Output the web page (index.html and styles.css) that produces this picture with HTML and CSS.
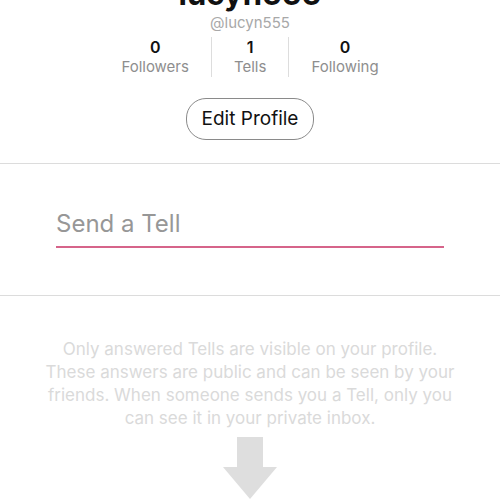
FILE: index.html
```
<!DOCTYPE html>
<html>
	<head>
		<meta charset="UTF-8">
		<title>Profile</title>
		<link rel="stylesheet" href="styles.css">
	</head>
	<body>
		<div class="profile">
			<div class="name">lucyn555</div>
			<div class="handle">@lucyn555</div>
			<ul class="stats">
				<li><b>0</b><span>Followers</span></li>
				<li><b>1</b><span>Tells</span></li>
				<li><b>0</b><span>Following</span></li>
			</ul>
			<a class="edit" href="#">Edit Profile</a>
		</div>
		<!--输入框-->
		<div class="send">
			<input type="text" placeholder="Send a Tell">
		</div>
		<div class="empty">
			<p>Only answered Tells are visible on your profile. These answers are public and can be seen by your friends. When someone sends you a Tell, only you can see it in your private inbox.</p>
			<svg class="arrow" width="56" height="62" viewBox="0 0 56 62">
				<polygon points="15,0 41,0 41,30 55,30 28,62 1,30 15,30" fill="#dedede" />
			</svg>
		</div>
	</body>
</html>
```
FILE: styles.css
```
* {
	margin: 0;
	padding: 0;
}

body {
	font-family: Inter, "Noto Sans", sans-serif;
	background: #fff;
	overflow: hidden;
}

.profile {
	display: flex;
	flex-direction: column;
	align-items: center;
	margin-top: -24px;
	padding-bottom: 23px;
	border-bottom: 1px solid #dcdcdc;
}

.name {
	font-size: 31px;
	font-weight: 700;
	line-height: 36px;
	color: #111;
}

.handle {
	margin-top: 2px;
	font-size: 15px;
	line-height: 18px;
	color: #a8a8a8;
}

.stats {
	list-style: none;
	display: flex;
	margin-top: 5px;
}

.stats li {
	display: flex;
	flex-direction: column;
	align-items: center;
	padding: 0 22px;
	border-left: 1px solid #ddd;
}

.stats li:first-child {
	border-left: none;
}

.stats b {
	font-size: 16px;
	font-weight: 600;
	line-height: 20px;
	color: #111;
}

.stats span {
	font-size: 15px;
	line-height: 20px;
	color: #8e8e8e;
}

.edit {
	margin-top: 21px;
	padding: 0 15px;
	height: 40px;
	line-height: 40px;
	border: 1px solid #8a8a8a;
	border-radius: 20px;
	font-size: 19px;
	color: #111;
	text-decoration: none;
}

.send {
	padding: 36px 56px 47px;
	border-bottom: 1px solid #dcdcdc;
}

.send input {
	display: block;
	width: 100%;
	border: none;
	border-bottom: 2px solid #d6648a;
	outline: none;
	font-family: inherit;
	font-size: 24px;
	height: 46px;
	color: #111;
}

.send input::placeholder {
	color: #979797;
}

.empty {
	display: flex;
	flex-direction: column;
	align-items: center;
	padding: 42px 40px 0;
}

.empty p {
	font-size: 17px;
	line-height: 23px;
	color: #dadada;
	text-align: center;
}

.arrow {
	margin-top: 7px;
}
```
